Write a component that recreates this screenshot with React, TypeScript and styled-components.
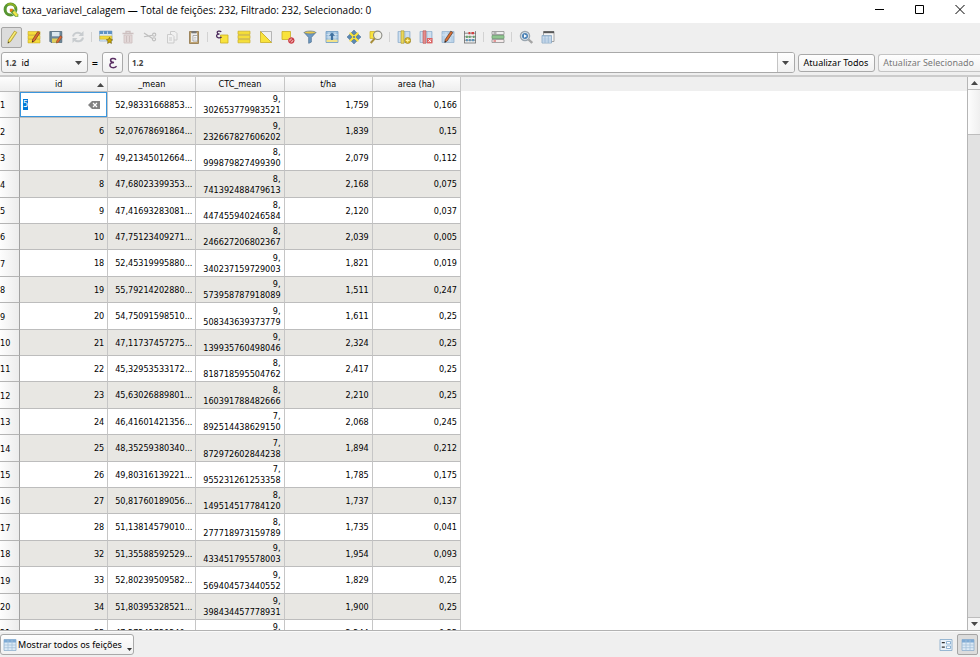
import React, { useEffect, useRef } from "react";
import styled, { createGlobalStyle, css } from "styled-components";

const GlobalStyle = createGlobalStyle`
  *, *::before, *::after { box-sizing: border-box; }
  html, body { margin: 0; height: 100%; overflow: hidden; }
  body, button, input, select { font: 9px/12px "Noto Sans", sans-serif; color: #000; }
  svg { display: block; flex: none; }
`;

const Window = styled.div`
  display: flex;
  flex-direction: column;
  height: 100vh;
  background: #efefef;
`;

const TitleBar = styled.header`
  display: flex;
  align-items: center;
  gap: 3px;
  height: 23px;
  flex: none;
  padding: 0 10px 3px 3px;
  background: #fff;
`;

const Title = styled.h1`
  flex: 1;
  margin: 0;
  font: 10px/16px "Open Sans", sans-serif;
  white-space: nowrap;
`;

const WindowButtons = styled.div`
  display: flex;
  gap: 20px;
`;

const WindowButton = styled.button`
  display: flex;
  align-items: center;
  justify-content: center;
  width: 20px;
  height: 18px;
  padding: 0;
  border: 0;
  background: none;
`;

const Toolbar = styled.div`
  display: flex;
  align-items: center;
  height: 28px;
  flex: none;
  padding-left: 1px;
`;

const ToolButton = styled.button<{ $pressed?: boolean }>`
  display: flex;
  align-items: center;
  justify-content: center;
  width: 21px;
  height: 21px;
  margin-right: 1px;
  padding: 0;
  border: 1px solid transparent;
  border-radius: 2px;
  background: none;
  ${(p) => p.$pressed && css`
    border-color: #a5a5a5;
    background: #dcdcdc;
  `}
  &:disabled svg { opacity: 0.55; }
`;

const ToolSeparator = styled.span`
  width: 1px;
  height: 10px;
  margin: 0 3px 0 2px;
  background: #d2d2d2;
`;

const FieldBar = styled.div`
  display: flex;
  align-items: center;
  height: 24px;
  flex: none;
  padding: 0 0 1px 1px;
`;

const frame = css`
  border: 1px solid #a9a9a9;
  border-radius: 3px;
  background: linear-gradient(#fefefe, #f1f1f1);
`;

const FieldSelectBox = styled.label`
  ${frame}
  display: flex;
  align-items: center;
  width: 87px;
  height: 21px;
  padding: 0 5px 0 3px;
`;

const TypeMark = styled.span`
  font: bold 8px/12px "Noto Sans", sans-serif;
  color: #404040;
`;

const FieldSelect = styled.select`
  flex: 1;
  min-width: 0;
  padding: 0 0 0 5px;
  border: 0;
  outline: 0;
  appearance: none;
  background: none;
`;

const EqualsSign = styled.span`
  width: 14px;
  text-align: center;
  font-size: 11px;
`;

const ExpressionButton = styled.button`
  ${frame}
  display: flex;
  align-items: center;
  justify-content: center;
  width: 21px;
  height: 21px;
  padding: 0;
`;

const ValueBox = styled.div`
  display: flex;
  align-items: center;
  flex: 1;
  height: 21px;
  margin: 0 3px 0 5px;
  padding-left: 3px;
  overflow: hidden;
  border: 1px solid #a9a9a9;
  border-radius: 3px;
  background: #fff;
`;

const ValueInput = styled.input`
  flex: 1;
  min-width: 0;
  padding: 0 4px;
  border: 0;
  outline: 0;
  background: none;
`;

const DropButton = styled.button`
  display: flex;
  align-items: center;
  justify-content: center;
  width: 17px;
  height: 19px;
  padding: 0;
  border: 0;
  border-left: 1px solid #c4c4c4;
  background: linear-gradient(#fefefe, #f1f1f1);
`;

const TextButton = styled.button`
  ${frame}
  height: 18px;
  margin-right: 3px;
  padding: 0 6px 0 5px;
  white-space: nowrap;
  &:last-child { margin-right: 0; padding-left: 4px; border-right: 0; border-radius: 3px 0 0 3px; }
  &:disabled { color: #787878; border-color: #c4c4c4; }
`;

const TableArea = styled.main`
  display: flex;
  flex: 1;
  min-height: 0;
  border-top: 2px solid #cbcbcb;
  border-bottom: 1px solid #b2b2b2;
`;

const TableView = styled.div`
  flex: 1;
  min-width: 0;
  overflow: hidden;
  background: linear-gradient(#efefef 14px, #fff 14px);
`;

const Table = styled.table`
  border-collapse: separate;
  border-spacing: 0;
  table-layout: fixed;
  width: 461px;
  font: 9px/11px "DejaVu Sans Condensed", "DejaVu Sans", sans-serif;
`;

const RowNumberColumn = styled.col`
  width: 20px;
`;

const HeaderCell = styled.th`
  height: 15px;
  padding: 1px 0 0;
  font-weight: normal;
  border-right: 1px solid #c6c6c6;
  border-bottom: 1px solid #b9b9b9;
  background: linear-gradient(#fdfdfd, #eeeeee);
`;

const HeaderLabel = styled.div<{ $sorted?: boolean }>`
  display: grid;
  grid-template-columns: ${(p) => (p.$sorted ? "1fr 10px" : "1fr")};
  align-items: center;
  text-align: center;
`;

const Row = styled.tr`
  height: 26px;
  &:nth-child(5n + 2), &:nth-child(5n + 4) { height: 27px; }
  &:nth-child(even) td { background: #e8e7e3; }
`;

const RowNumber = styled.th`
  padding: 2px 0 0;
  text-align: left;
  font-weight: normal;
  border-right: 1px solid #a2a2a2;
  border-bottom: 1px solid #b4b4b4;
  background: linear-gradient(90deg, #fdfdfd, #ececec);
`;

const Cell = styled.td<{ $editing?: boolean }>`
  height: 0;
  padding: ${(p) => (p.$editing ? "0" : "1px 3px 0 0")};
  text-align: right;
  border-right: 1px solid #c6c6c6;
  border-bottom: 1px solid #bdbdbd;
  white-space: pre-line;
`;

const Editor = styled.label`
  display: flex;
  align-items: center;
  height: 25px;
  padding: 0 6px 0 2px;
  border: 1px solid #3a96dd;
  background: #fff;
`;

const EditorInput = styled.input`
  flex: 1;
  min-width: 0;
  padding: 0;
  border: 0;
  outline: 0;
  font: 9px/11px "DejaVu Sans Condensed", "DejaVu Sans", sans-serif;
  &::selection { background: #0078d7; color: #fff; }
`;

const ScrollBar = styled.div`
  display: flex;
  flex-direction: column;
  width: 13px;
  border-left: 1px solid #b5b5b5;
  background: #e2e2e2;
`;

const ScrollButton = styled.button`
  display: flex;
  align-items: center;
  justify-content: center;
  height: 12px;
  padding: 0;
  border: 0;
  background: #f6f6f6;
`;

const ScrollThumb = styled.div`
  height: 46px;
  border: solid #bdbdbd;
  border-width: 1px 0;
  background: linear-gradient(90deg, #fdfdfd, #efefef);
`;

const ScrollTrack = styled.div`
  flex: 1;
  border-bottom: 1px solid #bdbdbd;
`;

const Footer = styled.footer`
  display: flex;
  align-items: center;
  height: 26px;
  flex: none;
  padding: 0 1px 0 0;
  border-top: 1px solid #fafafa;
`;

const FilterButton = styled.button`
  ${frame}
  display: flex;
  align-items: center;
  gap: 1px;
  height: 21px;
  margin-right: auto;
  padding: 0 1px 0 2px;
  white-space: nowrap;
`;

const MenuArrow = styled.span`
  align-self: flex-end;
  margin: 0 0 3px 4px;
`;

type IconProps = { children: React.ReactNode; size?: number };
const Icon = ({ children, size = 14 }: IconProps) => (
  <svg width={size} height={size} viewBox="0 0 14 14" fill="none" aria-hidden="true">{children}</svg>
);

const Arrow = ({ up }: { up?: boolean }) => (
  <svg width="7" height="4" viewBox="0 0 7 4" aria-hidden="true">
    <path d={up ? "M0 4 3.5 0 7 4Z" : "M0 0h7L3.5 4Z"} fill="#484848" />
  </svg>
);

const pencil = (
  <>
    <path d="M3.4 10.2 9.6 1l2.2 1.4-6.2 9.2-2.7 1.6Z" fill="#ead94c" stroke="#a08e28" strokeWidth=".7" />
    <path d="m4.4 10.8 6.1-9.2" stroke="#fff5a0" strokeWidth=".8" />
    <path d="m2.9 13.2.2-1.6 1.1.8Z" fill="#333" />
  </>
);
const redPencil = (
  <>
    <path d="m5.6 9.6 5.2-8 2 1.3-5.2 8-2.3 1.3Z" fill="#d96b32" stroke="#7b3b1d" strokeWidth=".7" />
    <path d="m5.3 12.2.1-1.5 1 .7Z" fill="#222" />
  </>
);
const tableGrid = (
  <>
    <path d="M1 1.5h12v11H1Z" fill="#dceaf6" stroke="#8fb0ce" strokeWidth=".8" />
    <path d="M1 1.5h12v3H1Z" fill="#7fabd5" />
    <path d="M1 7h12M1 9.700h12M5 2v10.500M9 2v10.500" stroke="#a5c1da" strokeWidth=".8" />
  </>
);
const blueSheet = <path d="M1 1.500h12v11H1Z" fill="#b9d2e8" stroke="#8eaecb" strokeWidth=".7" />;

const icons: Record<string, React.ReactNode> = {
  edit: pencil,
  multiEdit: (
    <>
      <path d="M1 1.500h12v3.400H1ZM1 5.500h12v3.400H1ZM1 9.500h12v3.400H1Z" fill="#f4dc3c" stroke="#c9ad25" strokeWidth=".6" />
      {redPencil}
    </>
  ),
  save: (
    <>
      <path d="M.8 1.500h12v11H2L.8 11.300Z" fill="#6b8799" stroke="#4b6374" strokeWidth=".7" />
      <path d="M3 2h7.500v4.300H3Z" fill="#dce8ee" />
      <path d="M3 8.500h6.500v4.200H3Z" fill="#e0cf5a" />
      <path d="m7.600 11 3.700-5.300 1.900 1.200-3.700 5.300-2 .9Z" fill="#e06a32" stroke="#7b3b1d" strokeWidth=".5" />
    </>
  ),
  reload: (
    <g stroke="#a9b0b5" strokeWidth="2">
      <path d="M2 6.500C2.500 3 7.500 1.200 10.500 4.200M12 7.500c-.5 3.500-5.500 5.300-8.500 2.300" />
      <path d="M12.500 1v5h-5ZM1.500 13V8h5Z" fill="#a9b0b5" stroke="none" />
    </g>
  ),
  addFeature: (
    <>
      <path d="M.5 1h12.500v10H.5Z" fill="#dceaf6" stroke="#8fb0ce" strokeWidth=".7" />
      <path d="M.5 1h12.500v3H.5Z" fill="#5f92c4" />
      <path d="M4.500 1.500v9M8.500 1.500v9" stroke="#d9e6f1" strokeWidth=".8" />
      <path d="M.8 6h12v3.200H.8Z" fill="#f1d83b" stroke="#c9ad25" strokeWidth=".5" />
      <path d="m10.500 7.300 1 2 2.200.4-1.500 1.500.3 2.200-2-1-2 1 .4-2.200-1.600-1.500 2.200-.4Z" fill="#c9a600" stroke="#5e5010" strokeWidth=".5" />
    </>
  ),
  trash: (
    <g stroke="#b39a9a">
      <path d="M1.500 3.500h11M5 3V1.500h4V3" strokeWidth="1.300" />
      <path d="M3 5h8v8H3Z" fill="#d9c4c4" strokeWidth=".8" />
      <path d="M5.500 6v6M8.500 6v6" />
    </g>
  ),
  cut: (
    <g stroke="#979797" strokeWidth="1.100">
      <path d="m1 3 8.500 5.500M1 6.800l8.500-1.600" />
      <circle cx="11.200" cy="4.700" r="1.600" />
      <circle cx="11" cy="9.300" r="1.600" />
    </g>
  ),
  copy: (
    <g stroke="#a8a8a8" strokeWidth=".9" fill="#f3f3f3">
      <path d="M5.500 1.500h4.500l2 2V10H5.500Z" />
      <path d="M2.500 4.500h4.500l2 2V13H2.500Z" />
      <path d="M4 8h3M4 10h3" />
    </g>
  ),
  paste: (
    <>
      <path d="M2.500 1.500h9v12h-9Z" fill="#c0a473" stroke="#8f7548" strokeWidth=".8" />
      <path d="M4 3h6v9H4Z" fill="#ededed" />
      <path d="M4.500 1h5v2.300h-5Z" fill="#777" />
      <path d="M6 5.500h4.500V11H6Z" fill="#fff" stroke="#8d8d8d" strokeWidth=".7" />
      <path d="M7 7.300h2.500M7 9h2.500" stroke="#999" strokeWidth=".6" />
    </>
  ),
  selectExpression: (
    <>
      <path d="M5.500 5h7.500v8H5.500Z" fill="#f9e33c" stroke="#c9ad25" strokeWidth=".8" />
      <path d="M6.300 1.800C4.500.4 2 1.100 2.200 2.700c.1 1 1.100 1.300 2.300 1.300C2.800 4 1.400 4.700 1.600 6.100c.3 2 3.200 2.300 5 .8" stroke="#4b2a5c" strokeWidth="1.300" />
    </>
  ),
  selectAll: <path d="M1 1.200h12v3.200H1ZM1 5.400h12v3.200H1ZM1 9.600h12v3.200H1Z" fill="#f6df3a" stroke="#c9ad25" strokeWidth=".7" />,
  invert: (
    <>
      <path d="M1.500 1.500h11v11Z" fill="#f1f1f1" stroke="#a6a6a6" strokeWidth=".8" />
      <path d="M1.500 1.500v11h11Z" fill="#f9e33c" stroke="#c9ad25" strokeWidth=".8" />
    </>
  ),
  deselect: (
    <>
      <path d="M1 1.500h8.500v8H1Z" fill="#f9e33c" stroke="#c9ad25" strokeWidth=".8" />
      <circle cx="10.300" cy="10.500" r="3.200" fill="#e99a9a" />
      <circle cx="10.300" cy="10.500" r="2.600" stroke="#c22f3a" />
      <path d="m8.600 12.200 3.400-3.400" stroke="#c22f3a" />
    </>
  ),
  filter: (
    <>
      <path d="M1.200 2.500 5.700 7.500v5.800l2.600-1.200V7.500l4.500-5Z" fill="#6f9bc4" stroke="#44698d" strokeWidth=".7" />
      <ellipse cx="7" cy="2.500" rx="5.800" ry="1.400" fill="#e8c74b" stroke="#5f7d98" strokeWidth=".7" />
    </>
  ),
  moveTop: (
    <>
      <path d="M1 1.500h12v11H1Z" fill="#9dc0de" stroke="#6f9ac2" strokeWidth=".8" />
      <path d="M1.500 9.700h11v2.300h-11Z" fill="#f1e28a" />
      <path d="M1.500 4.500h11M1.500 7h11M4 2v7.500M10 2v7.500" stroke="#dce9f4" strokeWidth=".7" />
      <path d="m7 2.500 3 3.300H8V10H6V5.800H4Z" fill="#3f709f" />
    </>
  ),
  pan: (
    <>
      <path d="M2.500 2.500h9v9h-9Z" fill="#f9e33c" />
      <path d="m7 0 2.600 2.700L7 5 4.400 2.700ZM7 14l2.600-2.700L7 9l-2.600 2.300ZM0 7l2.700-2.600L5 7 2.700 9.600ZM14 7l-2.700-2.600L9 7l2.300 2.600Z" fill="#5b88b4" stroke="#41688e" strokeWidth=".5" />
      <circle cx="7" cy="7" r="1.100" fill="#4f7fae" />
    </>
  ),
  zoomTo: (
    <>
      <path d="M1 1.500h7v7H1Z" fill="#f9e33c" stroke="#c9ad25" strokeWidth=".7" />
      <circle cx="8.700" cy="5.300" r="4.200" fill="#f2f2ea" fillOpacity=".9" stroke="#8b8b84" strokeWidth="1.100" />
      <path d="m5.700 8.600-4 4.400" stroke="#a88f3c" strokeWidth="2" />
    </>
  ),
  newField: (
    <>
      {blueSheet}
      <path d="M2 2h2v10H2ZM9 2h3v10H9Z" fill="#cfdfee" />
      <path d="M4 .8h3v12.500H4Z" fill="#ead75b" stroke="#aa952c" strokeWidth=".6" />
      <circle cx="10.700" cy="10.500" r="3" fill="#d8b72c" stroke="#947a15" strokeWidth=".6" />
      <path d="M10.700 8.700v3.600M8.900 10.500h3.600" stroke="#fff3a8" />
    </>
  ),
  deleteField: (
    <>
      {blueSheet}
      <path d="M2 2h2v10H2ZM9 2h3v10H9Z" fill="#cfdfee" />
      <path d="M4 .8h3v12.500H4Z" fill="#e48d8d" stroke="#b75252" strokeWidth=".6" />
      <path d="M8 8h5.500v5.400H8Z" fill="#dd6363" />
      <path d="m9.400 9.400 2.600 2.600M12 9.400l-2.600 2.600" stroke="#fff" />
    </>
  ),
  editField: (
    <>
      {blueSheet}
      <path d="M5 2v10M9 2v10M1 5h12" stroke="#d4e3f1" />
      <path d="m4.200 9.600 5.600-8.400 2 1.300-5.600 8.400-2.300 1.400Z" fill="#dd7032" stroke="#54382a" strokeWidth=".7" />
      <path d="m3.600 12.700.3-1.900 1.300.9Z" fill="#222" />
    </>
  ),
  calculator: (
    <>
      <path d="M1.500 1v12M12.500 1v12M1 3.200h12M1 6.800h12M1 10.200h12M1 13h12" stroke="#707070" strokeWidth=".8" />
      <path d="M5.500 3.200h1.800M8.500 3.200h2.500" stroke="#d23f3f" strokeWidth="2.200" />
      <path d="M3 6.800h1.800M5.800 6.800h1.800M10 6.800h1.500" stroke="#67a56b" strokeWidth="2.200" />
      <path d="M3 10.200h1.800M6 10.200h1.800M8.800 10.200h2.500" stroke="#5c93b8" strokeWidth="2.200" />
    </>
  ),
  conditional: (
    <>
      <path d="M1 1.500h12v3H1Z" fill="#eee" stroke="#8f8f8f" strokeWidth=".8" />
      <path d="M1 5.500h12v3H1Z" fill="#8fc68f" stroke="#6f9c72" strokeWidth=".8" />
      <path d="M1 9.500h12v3H1Z" fill="#f4eaea" stroke="#8f8f8f" strokeWidth=".8" />
      <path d="M2.500 3h3" stroke="#777" />
      <path d="M2.500 11h2.500" stroke="#d04444" />
    </>
  ),
  action: (
    <>
      <path d="m9.500 9.500 3.700 3.500" stroke="#a5a5a5" strokeWidth="2.400" />
      <circle cx="6" cy="6" r="4.500" fill="#e8eff5" stroke="#9aa6b0" strokeWidth="1.500" />
      <circle cx="6" cy="6" r="3" fill="#4c82b5" />
      <path d="M5 4.200 8 6 5 7.800Z" fill="#fff" />
    </>
  ),
  dock: (
    <>
      <path d="M2.500 1.500h10.500v10H2.500Z" fill="#f5f5f5" stroke="#929292" strokeWidth=".8" />
      <path d="M2.500 1.200h10.500v2H2.500Z" fill="#595959" />
      <path d="M1 5.500h9.500v7.500H1Z" fill="#dce9f5" stroke="#85a5c2" strokeWidth=".8" />
      <path d="M1 6.800h9.500M1 9h9.500M1 11h9.500M4 6v7M7.300 6v7" stroke="#93b3d1" strokeWidth=".7" />
    </>
  ),
  table: tableGrid,
  form: (
    <>
      <path d="M1 1.500h12v11H1Z" fill="#eaf2f9" stroke="#8fb0ce" strokeWidth=".9" />
      <path d="M7.500 3.500h4v2.500h-4ZM7.500 8h4v2.500h-4Z" fill="#fff" stroke="#79a3ca" strokeWidth=".8" />
      <path d="M2.800 4.700h3M2.800 9.200h3" stroke="#333" strokeWidth="1.200" />
    </>
  ),
};

type Tool = { icon: string; label: string; pressed?: boolean; disabled?: boolean };
const toolGroups: Tool[][] = [
  [
    { icon: "edit", label: "Alternar modo de edição", pressed: true },
    { icon: "multiEdit", label: "Modo de edição múltipla" },
    { icon: "save", label: "Salvar edições" },
    { icon: "reload", label: "Recarregar a tabela", disabled: true },
  ],
  [
    { icon: "addFeature", label: "Adicionar feição" },
    { icon: "trash", label: "Excluir feições", disabled: true },
    { icon: "cut", label: "Recortar", disabled: true },
    { icon: "copy", label: "Copiar", disabled: true },
    { icon: "paste", label: "Colar" },
  ],
  [
    { icon: "selectExpression", label: "Selecionar por expressão" },
    { icon: "selectAll", label: "Selecionar tudo" },
    { icon: "invert", label: "Inverter seleção" },
    { icon: "deselect", label: "Desfazer seleção" },
    { icon: "filter", label: "Filtrar" },
    { icon: "moveTop", label: "Mover seleção para o topo" },
    { icon: "pan", label: "Mover mapa" },
    { icon: "zoomTo", label: "Aproximar" },
  ],
  [
    { icon: "newField", label: "Novo campo" },
    { icon: "deleteField", label: "Excluir campo" },
    { icon: "editField", label: "Organizar colunas" },
    { icon: "calculator", label: "Calculadora de campo" },
  ],
  [{ icon: "conditional", label: "Formatação condicional" }],
  [
    { icon: "action", label: "Ações" },
    { icon: "dock", label: "Encaixar tabela" },
  ],
];

const columns = ["id", "_mean", "CTC_mean", "t/ha", "area (ha)"];
const rows = [
  ["5", "52,98331668853...", "9,\n302653779983521", "1,759", "0,166"],
  ["6", "52,07678691864...", "9,\n232667827606202", "1,839", "0,15"],
  ["7", "49,21345012664...", "8,\n999879827499390", "2,079", "0,112"],
  ["8", "47,68023399353...", "8,\n741392488479613", "2,168", "0,075"],
  ["9", "47,41693283081...", "8,\n447455940246584", "2,120", "0,037"],
  ["10", "47,75123409271...", "8,\n246627206802367", "2,039", "0,005"],
  ["18", "52,45319995880...", "9,\n340237159729003", "1,821", "0,019"],
  ["19", "55,79214202880...", "9,\n573958787918089", "1,511", "0,247"],
  ["20", "54,75091598510...", "9,\n508343639373779", "1,611", "0,25"],
  ["21", "47,11737457275...", "9,\n139935760498046", "2,324", "0,25"],
  ["22", "45,32953533172...", "8,\n818718595504762", "2,417", "0,25"],
  ["23", "45,63026889801...", "8,\n160391788482666", "2,210", "0,25"],
  ["24", "46,41601421356...", "7,\n892514438629150", "2,068", "0,245"],
  ["25", "48,35259380340...", "7,\n872972602844238", "1,894", "0,212"],
  ["26", "49,80316139221...", "7,\n955231261253358", "1,785", "0,175"],
  ["27", "50,81760189056...", "8,\n149514517784120", "1,737", "0,137"],
  ["28", "51,13814579010...", "8,\n277718973159789", "1,735", "0,041"],
  ["32", "51,35588592529...", "9,\n433451795578003", "1,954", "0,093"],
  ["33", "52,80239509582...", "9,\n569404573440552", "1,829", "0,25"],
  ["34", "51,80395328521...", "9,\n398434457778931", "1,900", "0,25"],
  ["35", "47,27241720240...", "9,\n120849609375000", "2,244", "0,25"],
];

function CellEditor({ value }: { value: string }) {
  const input = useRef<HTMLInputElement>(null);
  useEffect(() => {
    input.current?.focus();
    input.current?.select();
  }, []);
  return (
    <Editor>
      <EditorInput ref={input} defaultValue={value} aria-label="id" />
      <svg width="12" height="8" viewBox="0 0 12 8" aria-hidden="true">
        <path d="M0 4 4 0h8v8H4Z" fill="#828282" />
        <path d="m5 2 4 4M9 2 5 6" stroke="#fff" strokeWidth="1.200" />
      </svg>
    </Editor>
  );
}

const Logo = () => (
  <svg width="16" height="16" viewBox="0 0 16 16" aria-hidden="true">
    <circle cx="7.500" cy="7.500" r="5.400" fill="none" stroke="#589632" strokeWidth="3" />
    <path d="M4.500 2.800A5.400 5.400 0 0 1 12.500 5.500" fill="none" stroke="#93b023" strokeWidth="1.600" />
    <path d="M7 7h3.500l5 5.500V15h-3.200L7 9.800Z" fill="#589632" stroke="#fff" strokeWidth=".5" />
    <path d="M6.800 6.800h3v1.600L8.500 9.800H6.800Z" fill="#ee7913" />
    <path d="m9.500 10.500 1.800-1.800 3.200 3.600v2h-1.700Z" fill="#f0e64a" />
  </svg>
);

export default function App() {
  return (
    <Window>
      <GlobalStyle />
      <TitleBar>
        <Logo />
        <Title>taxa_variavel_calagem — Total de feições: 232, Filtrado: 232, Selecionado: 0</Title>
        <WindowButtons>
          <WindowButton aria-label="Minimizar">
            <svg width="10" height="10" viewBox="0 0 10 10"><path d="M0 4.500h9" stroke="#000" /></svg>
          </WindowButton>
          <WindowButton aria-label="Maximizar">
            <svg width="10" height="10" viewBox="0 0 10 10"><path d="M.5 .5h8v8h-8Z" fill="none" stroke="#000" /></svg>
          </WindowButton>
          <WindowButton aria-label="Fechar">
            <svg width="10" height="10" viewBox="0 0 10 10"><path d="m.5 0 9 9M9.500 0l-9 9" stroke="#000" /></svg>
          </WindowButton>
        </WindowButtons>
      </TitleBar>

      <Toolbar role="toolbar">
        {toolGroups.map((group, g) => (
          <React.Fragment key={g}>
            {g > 0 && <ToolSeparator />}
            {group.map((t) => (
              <ToolButton key={t.icon} $pressed={t.pressed} disabled={t.disabled} aria-label={t.label}>
                <Icon>{icons[t.icon]}</Icon>
              </ToolButton>
            ))}
          </React.Fragment>
        ))}
      </Toolbar>

      <FieldBar>
        <FieldSelectBox>
          <TypeMark>1.2</TypeMark>
          <FieldSelect defaultValue="id" aria-label="Campo">
            {columns.map((c) => <option key={c}>{c}</option>)}
          </FieldSelect>
          <Arrow />
        </FieldSelectBox>
        <EqualsSign>=</EqualsSign>
        <ExpressionButton aria-label="Expressão">
          <Icon size={12}>
            <path d="M10.500 3.200C8.500 1 4 1.500 4.200 4c.1 1.700 1.800 2.300 4 2.300C5.500 6.300 3.200 7.300 3.400 9.700c.3 3.300 5.300 3.600 7.800 1" stroke="#5a2f63" strokeWidth="1.700" />
          </Icon>
        </ExpressionButton>
        <ValueBox>
          <TypeMark>1.2</TypeMark>
          <ValueInput aria-label="Valor" />
          <DropButton aria-label="Expressões recentes"><Arrow /></DropButton>
        </ValueBox>
        <TextButton>Atualizar Todos</TextButton>
        <TextButton disabled>Atualizar Selecionado</TextButton>
      </FieldBar>

      <TableArea>
        <TableView>
          <Table>
            <colgroup>
              <RowNumberColumn />
              {columns.map((c) => <col key={c} />)}
            </colgroup>
            <thead>
              <tr>
                <HeaderCell />
                {columns.map((c, i) => (
                  <HeaderCell key={c} scope="col">
                    <HeaderLabel $sorted={i === 0}>
                      {c}
                      {i === 0 && <Arrow up />}
                    </HeaderLabel>
                  </HeaderCell>
                ))}
              </tr>
            </thead>
            <tbody>
              {rows.map((r, i) => (
                <Row key={r[0]}>
                  <RowNumber scope="row">{i + 1}</RowNumber>
                  {r.map((v, c) => {
                    const editing = i === 0 && c === 0;
                    return (
                      <Cell key={c} $editing={editing}>
                        {editing ? <CellEditor value={v} /> : v}
                      </Cell>
                    );
                  })}
                </Row>
              ))}
            </tbody>
          </Table>
        </TableView>
        <ScrollBar>
          <ScrollButton aria-label="Rolar para cima"><Arrow up /></ScrollButton>
          <ScrollThumb />
          <ScrollTrack />
          <ScrollButton aria-label="Rolar para baixo"><Arrow /></ScrollButton>
        </ScrollBar>
      </TableArea>

      <Footer>
        <FilterButton>
          <Icon>{icons.table}</Icon>
          Mostrar todos os feições
          <MenuArrow>
            <svg width="5" height="3" viewBox="0 0 5 3" aria-hidden="true"><path d="M0 0h5L2.500 3Z" fill="#333" /></svg>
          </MenuArrow>
        </FilterButton>
        <ToolButton aria-label="Visão de formulário"><Icon>{icons.form}</Icon></ToolButton>
        <ToolButton $pressed aria-label="Visão de tabela"><Icon>{icons.table}</Icon></ToolButton>
      </Footer>
    </Window>
  );
}
